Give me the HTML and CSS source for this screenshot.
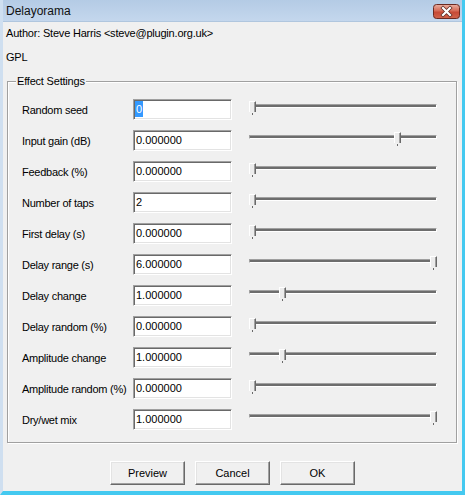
FILE: index.html
```html
<!DOCTYPE html>
<html>
<head>
<meta charset="utf-8">
<link rel="stylesheet" href="styles.css">
</head>
<body>
<div class="window">
  <div class="titlebar">
    <span class="title">Delayorama</span>
    <span class="close">
      <svg width="27" height="15" viewBox="0 0 27 15">
        <defs>
          <linearGradient id="cg" x1="0" y1="0" x2="0" y2="1">
            <stop offset="0" stop-color="#eab0a2"/>
            <stop offset="0.45" stop-color="#d56a56"/>
            <stop offset="0.55" stop-color="#c74a36"/>
            <stop offset="1" stop-color="#d0644c"/>
          </linearGradient>
        </defs>
        <rect x="0.5" y="0.5" width="26" height="14" rx="3" fill="url(#cg)" stroke="#6b2a22"/>
        <path d="M10 4 L17 11 M17 4 L10 11" stroke="#5a2a24" stroke-width="3.6" stroke-linecap="square"/>
        <path d="M10 4 L17 11 M17 4 L10 11" stroke="#ffffff" stroke-width="2.2" stroke-linecap="square"/>
      </svg>
    </span>
  </div>
  <div class="content">
    <div class="info">Author: Steve Harris &lt;steve@plugin.org.uk&gt;</div>
    <div class="info info-gpl">GPL</div>
    <div class="group">
      <span class="legend">Effect Settings</span>
      <div class="row">
        <span class="label">Random seed</span>
        <div class="input"><span class="sel">0</span></div>
        <div class="slider"><div class="track"></div><div class="thumb" style="left:0px"></div></div>
      </div>
      <div class="row">
        <span class="label">Input gain (dB)</span>
        <div class="input">0.000000</div>
        <div class="slider"><div class="track"></div><div class="thumb" style="left:145px"></div></div>
      </div>
      <div class="row">
        <span class="label">Feedback (%)</span>
        <div class="input">0.000000</div>
        <div class="slider"><div class="track"></div><div class="thumb" style="left:0px"></div></div>
      </div>
      <div class="row">
        <span class="label">Number of taps</span>
        <div class="input">2</div>
        <div class="slider"><div class="track"></div><div class="thumb" style="left:0px"></div></div>
      </div>
      <div class="row">
        <span class="label">First delay (s)</span>
        <div class="input">0.000000</div>
        <div class="slider"><div class="track"></div><div class="thumb" style="left:0px"></div></div>
      </div>
      <div class="row">
        <span class="label">Delay range (s)</span>
        <div class="input">6.000000</div>
        <div class="slider"><div class="track"></div><div class="thumb" style="left:181px"></div></div>
      </div>
      <div class="row">
        <span class="label">Delay change</span>
        <div class="input">1.000000</div>
        <div class="slider"><div class="track"></div><div class="thumb" style="left:30px"></div></div>
      </div>
      <div class="row">
        <span class="label">Delay random (%)</span>
        <div class="input">0.000000</div>
        <div class="slider"><div class="track"></div><div class="thumb" style="left:0px"></div></div>
      </div>
      <div class="row">
        <span class="label">Amplitude change</span>
        <div class="input">1.000000</div>
        <div class="slider"><div class="track"></div><div class="thumb" style="left:30px"></div></div>
      </div>
      <div class="row">
        <span class="label">Amplitude random (%)</span>
        <div class="input">0.000000</div>
        <div class="slider"><div class="track"></div><div class="thumb" style="left:0px"></div></div>
      </div>
      <div class="row">
        <span class="label">Dry/wet mix</span>
        <div class="input">1.000000</div>
        <div class="slider"><div class="track"></div><div class="thumb" style="left:181px"></div></div>
      </div>
    </div>
    <div class="buttons">
      <div class="button">Preview</div>
      <div class="button">Cancel</div>
      <div class="button">OK</div>
    </div>
  </div>
</div>
</body>
</html>
```

FILE: styles.css
```css
html, body {
  margin: 0;
  padding: 0;
}
body {
  font-family: "Liberation Sans", Arial, sans-serif;
  font-size: 11px;
  color: #000;
  background: #f0f0f0;
}
.window {
  width: 465px;
  height: 495px;
  box-sizing: border-box;
  background: #f0f0f0;
  border-left: 3px solid #cfdff0;
  border-right: 3px solid #44c9f0;
  border-bottom: 4px solid #44c9f0;
  display: flex;
  flex-direction: column;
  overflow: hidden;
}
.titlebar {
  height: 22px;
  box-sizing: border-box;
  display: flex;
  align-items: center;
  justify-content: space-between;
  padding: 0 2px 0 3px;
  background: linear-gradient(to bottom, #b4cbe5, #c4d7ed);
  border-bottom: 1px solid #b0c6de;
}
.title {
  font-size: 12px;
  color: #111;
  padding-top: 1px;
}
.close {
  display: flex;
  margin-top: 1px;
}
.content {
  padding: 0 3px;
}
.info {
  height: 22px;
  line-height: 22px;
  letter-spacing: -0.2px;
}
.info-gpl {
  margin-top: 2px;
}
.group {
  position: relative;
  margin: 13px 2px 0 1px;
  border: 1px solid #a0a0a0;
  box-shadow: inset 1px 1px 0 #fff, 1px 1px 0 #fff;
  padding: 12px 0 7px 14px;
}
.legend {
  position: absolute;
  top: -8px;
  left: 8px;
  padding: 0 1px;
  background: #f0f0f0;
  line-height: 14px;
  letter-spacing: -0.2px;
}
.row {
  display: flex;
  align-items: center;
  height: 31px;
}
.label {
  width: 111px;
  white-space: nowrap;
  letter-spacing: -0.25px;
}
.input {
  width: 99px;
  height: 21px;
  box-sizing: border-box;
  background: #fff;
  border: 1px solid;
  border-color: #a0a0a0 #fff #fff #a0a0a0;
  box-shadow: inset 1px 1px 0 #696969, inset -1px -1px 0 #e3e3e3;
  padding-left: 2px;
  line-height: 19px;
}
.sel {
  display: inline-block;
  margin-left: -1px;
  padding: 0 1px;
  line-height: 16px;
  background: #3399ff;
  color: #fff;
  vertical-align: top;
  margin-top: 1px;
}
.slider {
  position: relative;
  width: 188px;
  height: 31px;
  margin-left: 17px;
}
.track {
  position: absolute;
  top: 10px;
  left: 0;
  width: 188px;
  height: 4px;
  box-sizing: border-box;
  border-top: 1px solid #a0a0a0;
  border-left: 1px solid #a0a0a0;
  border-bottom: 1px solid #fff;
  border-right: 1px solid #fff;
  background: #6d6d6d;
}
.thumb {
  position: absolute;
  top: 7px;
  width: 7px;
  height: 11px;
  box-sizing: border-box;
  background: #ececec;
  border-left: 1px solid #fff;
  border-top: 1px solid #fff;
  border-right: 1px solid #696969;
  box-shadow: inset -1px 0 0 #a0a0a0;
}
.thumb::after {
  content: "";
  position: absolute;
  left: 2px;
  top: 11px;
  width: 1px;
  height: 2px;
  background: #696969;
}
.buttons {
  display: flex;
  justify-content: center;
  gap: 10px;
  margin-top: 18px;
}
.button {
  width: 75px;
  height: 24px;
  box-sizing: border-box;
  border: 1px solid;
  border-color: #fff #696969 #696969 #fff;
  box-shadow: inset -1px -1px 0 #a0a0a0, inset 1px 1px 0 #e3e3e3;
  background: #f0f0f0;
  text-align: center;
  line-height: 22px;
}
```
